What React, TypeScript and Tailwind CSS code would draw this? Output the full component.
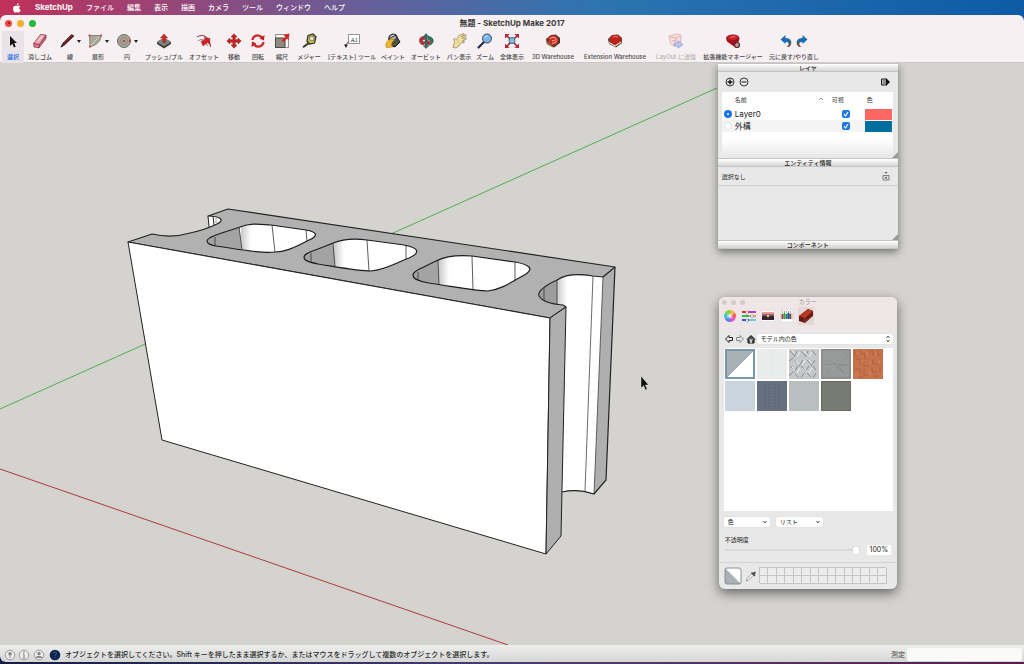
import type { ReactNode } from 'react';

const MENUS = ['ファイル', '編集', '表示', '描画', 'カメラ', 'ツール', 'ウィンドウ', 'ヘルプ'];

function Icon({ children }: { children: ReactNode }) {
  return (
    <svg viewBox="0 0 16 16" className="h-4 w-4" aria-hidden="true">
      {children}
    </svg>
  );
}

interface Tool {
  label: string;
  width: string;
  icon: ReactNode;
  menu?: boolean;
  active?: boolean;
  disabled?: boolean;
}

const TOOLS: Tool[] = [
  {
    label: '選択',
    width: 'w-[22px]',
    active: true,
    icon: <path d="M5 3v10l2.300-2.200L9 14.500l1.700-.8L9.200 10H12Z" fill="#111" />,
  },
  {
    label: '消しゴム',
    width: 'w-8',
    icon: (
      <g stroke="#8d4050" strokeWidth=".8" strokeLinejoin="round">
        <path d="m1.500 10.500 7-9 5.500.5-6.500 9.500Z" fill="#f5a5b4" />
        <path d="m1.500 10.500.5 3.500 5 .8.500-3.300Z" fill="#dd7c8f" />
        <path d="M14 2v3.500l-7 9.300.5-3.300Z" fill="#c9667c" />
        <path d="m6 8 5-5" stroke="#fff" />
      </g>
    ),
  },
  {
    label: '線',
    width: 'w-7',
    menu: true,
    icon: (
      <>
        <path d="m2 14 2-4 8.500-8.500L15 3 5.500 12Z" fill="#5a1620" stroke="#2a1214" strokeWidth=".6" />
        <path d="m5 10 8-7.500" stroke="#c23a3a" strokeWidth=".8" />
        <path d="m1.500 14.500 1-2 1.200 1Z" fill="#111" />
      </>
    ),
  },
  {
    label: '扇形',
    width: 'w-7',
    menu: true,
    icon: (
      <>
        <path d="M2.500 2.500H14C14 9 8 13 3 13.500Z" fill="#a9a899" stroke="#77776b" strokeWidth=".8" />
        <path d="m3 13 9-9" stroke="#d9d8cc" />
        <path d="M1.500 1.500h2v2h-2zM13 1.500h2v2h-2zM2 12.500h2v2H2z" fill="#d14b42" />
      </>
    ),
  },
  {
    label: '円',
    width: 'w-[30px]',
    menu: true,
    icon: (
      <>
        <circle cx="8" cy="8" r="6.500" fill="#a2a295" stroke="#6f6f66" />
        <circle cx="8" cy="8" r="3.500" fill="none" stroke="#8b8b80" />
        <path d="M7 7h2v2H7zM13 7h2v2h-2z" fill="#d8392f" />
      </>
    ),
  },
  {
    label: 'プッシュ/プル',
    width: 'w-11',
    icon: (
      <>
        <path d="m1 9 7 4 7-4v2l-7 4.500L1 11Z" fill="#3c3e38" />
        <path d="m1 9 7-4 7 4-7 4Z" fill="#83867c" stroke="#4a4c46" strokeWidth=".5" />
        <path d="M8 1 4.500 5H7v4.500h2.500V5h2Z" fill="#d62727" stroke="#7c1515" strokeWidth=".5" />
      </>
    ),
  },
  {
    label: 'オフセット',
    width: 'w-9',
    icon: (
      <>
        <path d="M1 4C7 0 14 4 14.500 14" fill="none" stroke="#8f2a2a" />
        <path d="M2 8c4-3 8-1 9.500 5" fill="none" stroke="#55544f" strokeWidth=".7" />
        <path d="m5 8.500 4-2-1-2 6 1-.5 6-1.800-2L7 13Z" fill="#d71f26" stroke="#7d1a1c" strokeWidth=".4" />
      </>
    ),
  },
  {
    label: '移動',
    width: 'w-6',
    icon: (
      <path
        d="m8 .8 3 3.200H9.200v2.800H12V5l3.200 3L12 11V9.200H9.200V12H11l-3 3.200L5 12h1.800V9.200H4V11L.8 8 4 5v1.800h2.800V4H5Z"
        fill="#ce2222"
        stroke="#7e1919"
        strokeWidth=".5"
      />
    ),
  },
  {
    label: '回転',
    width: 'w-6',
    icon: (
      <>
        <path d="M2.500 7C3 2 9 1 12 4.500M13.500 9C13 14 7 15 4 11.500" fill="none" stroke="#d02828" strokeWidth="2.300" />
        <path d="m14.500 2-.5 5.500-4.500-2ZM1.500 14 2 8.500l4.500 2Z" fill="#c32020" />
      </>
    ),
  },
  {
    label: '縮尺',
    width: 'w-6',
    icon: (
      <>
        <path d="M1.500 1.500h13v13h-13Z" fill="#f7f4f2" stroke="#7a7971" strokeWidth=".8" />
        <path d="M1.500 5h9.500v9.500H1.500Z" fill="#8e8b80" stroke="#4b4a44" />
        <path d="m15.500.5-1 6.500-1.500-1.500-3.500 4-2-2 4-3.500L9.500 2Z" fill="#d92424" />
      </>
    ),
  },
  {
    label: 'メジャー',
    width: 'w-[30px]',
    icon: (
      <>
        <path d="M7 2.500 12 1l3 3-1.500 6-5 1L6 8Z" fill="#d9cf32" stroke="#252a25" strokeWidth="1.200" />
        <circle cx="10.700" cy="5.500" r="2.500" fill="#d9ddde" stroke="#444" strokeWidth=".7" />
        <path d="m7.500 9-6 4.500 1 1.500L9 10.500Z" fill="#39391b" />
      </>
    ),
  },
  {
    label: '[テキスト] ツール',
    width: 'w-14',
    icon: (
      <>
        <path d="M4.500 1.500h11v9h-11Z" fill="#fff" stroke="#777" strokeWidth=".8" />
        <path d="M4.500 8.500 2 11.500v2" stroke="#555" fill="none" />
        <path d="m0 11.500 2 3.500 2-3.500Z" fill="#222" />
        <text x="6.500" y="8.500" fontSize="6" fontFamily="Liberation Serif, serif" fill="#111">A1</text>
      </>
    ),
  },
  {
    label: 'ペイント',
    width: 'w-[26px]',
    icon: (
      <>
        <path d="M4 7C3 1 11-1 12 4" fill="none" stroke="#333" strokeWidth="1.300" />
        <path d="m4 6 7-3.500L15 9l-5 5-5-2Z" fill="#4f5046" stroke="#1c1c19" />
        <ellipse cx="8" cy="5.500" rx="4.200" ry="2" transform="rotate(-28 8 5.500)" fill="#aaa898" stroke="#111" strokeWidth=".6" />
        <path d="M6.500 6C1 7 0 12 1.500 14.500L8 14c-2.500-2-1.500-5 1.500-7Z" fill="#edb62b" stroke="#9b6a13" strokeWidth=".5" />
      </>
    ),
  },
  {
    label: 'オービット',
    width: 'w-10',
    icon: (
      <>
        <path d="M6.500 3.500C-.5 3 0 12 6 12l.5-2.500C3 9 4 7 6.500 6.500Z" fill="#b82c3b" stroke="#571d27" strokeWidth=".5" />
        <path d="M10 3.500c7 0 7 8 .5 9V9.500C13 9 12.500 7 10 6.500Z" fill="#2f7a62" stroke="#1f4437" strokeWidth=".5" />
        <path d="m8.500 6 4.500 3.500-3.500 3.500V11C6 11 5 9 4 8c2 .8 3.500 1 5 .6Z" fill="#c72f39" />
        <path d="M8 .5 5.500 3.500H7V13H5.500L8 15.500l2.500-2.500H9.200V3.500h1.600Z" fill="#30775e" stroke="#26352e" strokeWidth=".4" />
      </>
    ),
  },
  {
    label: 'パン表示',
    width: 'w-[26px]',
    icon: (
      <>
        <path
          d="M2 14.500 3.500 9 2.500 6 4 5.500l1.500 1L8 2.500l4.500-2 .8 1L10 4l4.500-2.500.8 1.200L11.500 5.500l3.500-.8.3 1.300-4 2 2.200.3-.5 1.200-3.500.5L8 13l-3 2Z"
          fill="#efdf9f"
          stroke="#7d7146"
          strokeWidth=".6"
        />
        <path d="m6 10 2-3" stroke="#c2ad67" strokeWidth=".6" />
      </>
    ),
  },
  {
    label: 'ズーム',
    width: 'w-[26px]',
    icon: (
      <>
        <path d="m1.500 14.500 6-6" stroke="#222b3c" strokeWidth="2.200" strokeLinecap="round" />
        <circle cx="10" cy="5.500" r="4.500" fill="#78b4e6" stroke="#34496a" />
        <path d="M7.500 5C8 3 10 2.500 11 3" stroke="#d5ecff" fill="none" />
      </>
    ),
  },
  {
    label: '全体表示',
    width: 'w-7',
    icon: (
      <>
        <path d="m2 2 12 12M14 2 2 14" stroke="#8d3441" strokeWidth="1.600" />
        <path d="M1 1h4.500L1 5.500ZM15 1v4.500L10.500 1ZM1 15v-4.500L5.500 15ZM15 15h-4.500l4.500-4.500Z" fill="#c61f30" />
        <circle cx="8" cy="7.500" r="3" fill="#86bde0" stroke="#31506b" strokeWidth=".8" />
      </>
    ),
  },
  {
    label: '3D Warehouse',
    width: 'w-[54px]',
    icon: (
      <>
        <path d="m1 6 5-4 5-.5L15 5v5l-6 4.500L2 11Z" fill="#4d3326" />
        <path d="m3 5 4-2.500h4L13.500 6 12 11l-4 2-4-3Z" fill="#cf2c22" />
        <path d="M5 5.500c3-2 6-1 6 .5S8.500 8 7 7.500M7 10c2 .5 4-.5 5-2.500" fill="none" stroke="#f2cab6" strokeWidth=".9" />
        <path d="m1 7 6 5 1 2.500L2 11Z" fill="#8d6b45" />
      </>
    ),
  },
  {
    label: 'Extension Warehouse',
    width: 'w-[70px]',
    icon: (
      <>
        <path d="m1 6 4-4 6-.5L15 5v5l-6 4.500L2 11Z" fill="#54432f" />
        <path d="M3 5c1-4 10-4 11 0v4l-5 3-6-3Z" fill="#c4201b" />
        <path d="M6 4.500c1-1.500 4-1.500 5 0" fill="none" stroke="#f08a78" />
        <path d="m2 9.500 6 3.500 6-4" fill="none" stroke="#e9d9c9" strokeWidth="1.200" />
      </>
    ),
  },
  {
    label: 'LayOut に送信',
    width: 'w-[52px]',
    disabled: true,
    icon: (
      <>
        <path d="m1 3 8-2 4 1-.5 8-7 3-3-2Z" fill="#f8dfe0" stroke="#e3a9ab" strokeWidth=".8" />
        <path d="m2 4 6 1 4-2M4 8l5-1M8 5v4" stroke="#dfa0a3" strokeWidth=".8" fill="none" />
        <path d="M6 10h4V8l5 3.500-5 3.500v-2H6Z" fill="#b8c9ed" stroke="#8496cd" strokeWidth=".7" />
      </>
    ),
  },
  {
    label: '拡張機能マネージャー',
    width: 'w-[62px]',
    icon: (
      <>
        <path d="M1 5c1-4 12-5 13.500 0L14 8l-5 5.500L2 8.500Z" fill="#a31218" />
        <path d="M2 5c2-3 10-3.500 11.500-.5L8 7.500Z" fill="#c7262a" />
        <path d="M5.500 4.500c1.500-1.200 3-1.200 4.500-.5" stroke="#f59a8e" strokeWidth=".8" fill="none" />
        <circle cx="12" cy="12" r="2.400" fill="#eee" stroke="#5e2429" strokeWidth="1.400" />
        <circle cx="12" cy="12" r=".8" fill="#73262b" />
      </>
    ),
  },
];

function Toolbar() {
  return (
    <div className="flex h-8 items-start pl-0.5">
      {TOOLS.map((tool) => (
        <button
          key={tool.label}
          type="button"
          disabled={tool.disabled}
          className={`flex h-8 shrink-0 flex-col items-center gap-1 pt-0.5 text-[6px] leading-[8px] font-medium whitespace-nowrap ${tool.width} ${
            tool.active ? 'bg-[#e9e3e8] text-[#2868e8]' : tool.disabled ? 'text-[#b5afb1]' : 'text-[#4a4748]'
          }`}
        >
          <span className="flex items-center gap-0.5">
            <Icon>{tool.icon}</Icon>
            {tool.menu && (
              <svg viewBox="0 0 4 3" className="h-[3px] w-1" aria-hidden="true">
                <path d="M0 0h4L2 3Z" fill="#222" />
              </svg>
            )}
          </span>
          <span>{tool.label}</span>
        </button>
      ))}
      <div className="flex w-[60px] shrink-0 flex-col items-center gap-1 pt-0.5 text-[6px] leading-[8px] font-medium whitespace-nowrap text-[#4a4748]">
        <span className="flex">
          <button type="button" aria-label="元に戻す">
            <Icon>
              <path d="M2.500 6.500 7.500 2v3c6 0 7.500 5 4 8.500.5-2.500-1-4.500-4-4.500v2Z" fill="#1a6db5" />
              <path d="M12.500 8c.8 2 .3 3.500-1 5.500-1 .8-2 .5-3 0 2-.5 2.500-2.500 2-4Z" fill="#6b5536" />
            </Icon>
          </button>
          <button type="button" aria-label="やり直し">
            <Icon>
              <path d="M13.500 6.500 8.500 2v3C2.500 5 1 10 4.500 13.500 4 11 5.500 9 8.500 9v2Z" fill="#1a6db5" />
              <path d="M3.500 8c-.8 2-.3 3.500 1 5.500 1 .8 2 .5 3 0-2-.5-2.500-2.500-2-4Z" fill="#6b5536" />
            </Icon>
          </button>
        </span>
        <span>元に戻す/やり直し</span>
      </div>
    </div>
  );
}

const HOLES = [
  {
    outline: 'M207 241C207 238 212 236 240 227 250 223 258 224 271 225L306 230C318 232 318 236 309 240 292 249 284 252 275 252 264 253 255 252 216 246 210 245 207 243 207 241Z',
    wall: 'M200 220H239L242 256H200Z',
    lines: 'M239 227l3 23M272 225l3 27M306 230l1 11M215 237v9',
    shade: 241,
  },
  {
    outline: 'M304 257C304 253 312 252 333 243 343 239 353 238 367 240L404 245C420 248 420 253 409 258 396 263 385 270 371 271 359 271 349 269 318 264 309 262 304 261 304 257Z',
    wall: 'M300 230H333L335 275H300Z',
    lines: 'M333 243l2 24M367 240l2 31M406 246v13M311 253v9',
    shade: 334,
  },
  {
    outline: 'M413 275C413 271 420 269 436 261 448 255 460 255 472 256L515 262C531 265 533 269 526 274 510 283 502 289 488 291 478 291 474 290 429 283 418 281 413 279 413 275Z',
    wall: 'M400 240H438L439 295H400Z',
    lines: 'M438 260l1 25M472 256l1 34M515 262v18M418 272v9',
    shade: 439,
  },
];

function BlockModel() {
  return (
    <svg
      viewBox="0 63 1024 582"
      preserveAspectRatio="xMidYMid slice"
      className="absolute inset-0 h-full w-full"
      role="img"
      aria-label="コンクリートブロック"
    >
      <defs>
        <linearGradient id="curve">
          <stop offset="0" stopColor="#c9c9c9" />
          <stop offset="1" stopColor="#fff" />
        </linearGradient>
        {HOLES.map((hole, i) => (
          <clipPath key={hole.shade} id={`hole${i}`}>
            <path d={hole.outline} />
          </clipPath>
        ))}
      </defs>
      <path d="M0 409 717 88" stroke="#4fae4f" />
      <path d="M0 469 508 645" stroke="#b23a3a" />

      {/* far end of the block, behind the notch */}
      <path d="M540 280 560 274 603 277 594 494C585 491 574 489 561 492L550 318Z" fill="#fff" />
      <path d="M557 276h10v32h-10Z" fill="url(#curve)" />
      <path d="M538 296C539 290 545 287 557 280V308Z" fill="#9d9d9d" />
      <path d="M603 277 615 267 606 480 594 494Z" fill="#afafaf" />
      <path d="M593 276 585 491" stroke="#444" strokeWidth=".8" />
      <path d="M603 277 594 494" stroke="#444" strokeWidth=".8" />
      <path d="M557 280v25M544 287v14" stroke="#333" strokeWidth=".8" />
      <path d="M208 216 222 216V224L209 228Z" fill="#fff" />
      <path d="M208 216l1 11M213 216l1 9" stroke="#222" />
      <path d="M216 216v7" stroke="#777" strokeWidth=".7" />

      <path
        d="M128 242 152 234C165 237 180 236 190 233 204 230 209 228 217 224 226 220 219 216 208 216L228 209 615 267 603 277 593 276C575 273 563 276 557 280 540 288 538 293 539 296 542 301 550 304 563 305L566 307 550 318Z"
        fill="#b1b1b1"
        stroke="#222"
        strokeWidth="1.200"
        strokeLinejoin="round"
      />
      {HOLES.map((hole, i) => (
        <g key={hole.shade}>
          <g clipPath={`url(#hole${i})`}>
            <path d={hole.outline} fill="#fff" />
            <rect x={hole.shade} y="210" width="10" height="90" fill="url(#curve)" />
            <path d={hole.wall} fill="#a3a3a3" />
            <path d={hole.lines} stroke="#333" strokeWidth=".8" />
          </g>
          <path d={hole.outline} fill="none" stroke="#1d1d1d" strokeWidth="1.200" />
        </g>
      ))}
      <path d="M128 242 550 318 546 554 162 440Z" fill="#fff" stroke="#222" strokeLinejoin="round" />
      <path d="M550 318 566 307 561 536 546 554Z" fill="#afafaf" stroke="#222" strokeLinejoin="round" />
      <path d="M615 267 606 480 594 494C585 491 574 489 562 492" fill="none" stroke="#222" strokeWidth="1.200" />
      <path d="M641 376v12l2.600-2.300 1.800 4.200 1.800-.8-1.800-4.100h3.200Z" fill="#111" stroke="#eee" strokeWidth=".4" />
    </svg>
  );
}

function TrayTitle({ children }: { children: ReactNode }) {
  return (
    <h2 className="h-[9px] border-y border-[#c4c4c4] bg-linear-to-b from-white to-[#d5d5d5] text-center text-[6px] leading-[7px] font-medium text-[#222]">
      {children}
    </h2>
  );
}

function ResizeCorner() {
  return (
    <svg viewBox="0 0 6 6" className="absolute right-0 bottom-0 h-1.5 w-1.5" aria-hidden="true">
      <path d="M6 0v6H0Z" fill="#999" />
    </svg>
  );
}

function LayerRow({ name, color, current }: { name: string; color: string; current?: boolean }) {
  return (
    <tr className="h-3 even:bg-[#f4f4f4]">
      <td className="w-[13px]">
        <input
          type="radio"
          name="layer"
          aria-label={name}
          defaultChecked={current}
          className="ml-0.5 block h-2 w-2 appearance-none rounded-full border border-[#e4e4e4] bg-white checked:border-[3px] checked:border-[#1775e5]"
        />
      </td>
      <td className="w-[97px] text-[8px] leading-[12px] text-[#222]">{name}</td>
      <td className="w-[33px]">
        <span className="relative ml-2.5 block h-2 w-2">
          <input
            type="checkbox"
            aria-label={`${name} 可視`}
            defaultChecked
            className="block h-2 w-2 appearance-none rounded-xs bg-[#1b78e6]"
          />
          <svg viewBox="0 0 8 8" className="pointer-events-none absolute inset-0 h-2 w-2" aria-hidden="true">
            <path d="m2 4 1.500 2L6 2" fill="none" stroke="#fff" strokeWidth="1.200" />
          </svg>
        </span>
      </td>
      <td className="pr-px">
        <span className={`block h-[11px] ${color}`} />
      </td>
    </tr>
  );
}

function Tray() {
  return (
    <section className="absolute top-0 left-[70.1%] w-[180px] bg-[#e8e8e8] shadow-[0_3px_8px_#0007]">
      <TrayTitle>レイヤ</TrayTitle>
      <div className="relative flex h-[86px] flex-col pr-[5px] pl-1">
        <div className="flex h-5 items-center gap-1 px-[3px]">
          <button type="button" aria-label="レイヤを追加">
            <svg viewBox="0 0 10 10" className="h-2.5 w-2.5">
              <circle cx="5" cy="5" r="4" fill="none" stroke="#222" strokeWidth=".9" />
              <path d="M5 2.500v5M2.500 5h5" stroke="#111" strokeWidth="1.400" />
            </svg>
          </button>
          <button type="button" aria-label="レイヤを削除">
            <svg viewBox="0 0 10 10" className="h-2.5 w-2.5">
              <circle cx="5" cy="5" r="4" fill="none" stroke="#222" strokeWidth=".9" />
              <path d="M2.500 5h5" stroke="#111" />
            </svg>
          </button>
          <button type="button" aria-label="詳細" className="ml-auto">
            <svg viewBox="0 0 10 10" className="h-2.5 w-2.5">
              <path d="M1.500 2h5v6h-5Z" fill="#bbb" stroke="#222" />
              <path d="M3 4h3M3 6h3" stroke="#444" strokeWidth=".7" />
              <path d="m6 1 4 4-4 4Z" fill="#111" />
            </svg>
          </button>
        </div>
        <div className="h-[62px] bg-linear-to-b from-white from-75% to-[#ececec]">
          <table className="w-full table-fixed border-collapse">
            <thead>
              <tr className="h-4 text-left text-[6px] leading-[8px] text-[#333]">
                <th className="w-[13px]" />
                <th className="w-[97px] font-normal">
                  <span className="flex justify-between pr-2">
                    名前
                    <svg viewBox="0 0 6 6" className="h-1.5 w-1.5" aria-hidden="true">
                      <path d="m1 4 2-2 2 2" fill="none" stroke="#666" strokeWidth=".7" />
                    </svg>
                  </span>
                </th>
                <th className="w-[33px] font-normal">可視</th>
                <th className="pl-0.5 font-normal">色</th>
              </tr>
            </thead>
            <tbody>
              <LayerRow name="Layer0" color="bg-[#ff6661]" current />
              <LayerRow name="外構" color="bg-[#006f9f]" />
            </tbody>
          </table>
        </div>
        <ResizeCorner />
      </div>
      <TrayTitle>エンティティ情報</TrayTitle>
      <div className="relative h-[73px]">
        <div className="flex h-[19px] items-center justify-between border-b border-[#cfcfcf] pr-2 pl-1 text-[6px] text-[#222]">
          <span>選択なし</span>
          <svg viewBox="0 0 8 10" className="h-2.5 w-2" aria-hidden="true">
            <path d="M1 4.500h6v4.500H1Z" fill="#ddd" stroke="#666" strokeWidth=".8" />
            <path d="M2.500 1h3L4 3Z" fill="#666" />
            <path d="M3 6h2v1.500H3Z" fill="#666" />
          </svg>
        </div>
        <ResizeCorner />
      </div>
      <TrayTitle>コンポーネント</TrayTitle>
    </section>
  );
}

const PICKER_TABS = [
  {
    label: 'カラーホイール',
    icon: (
      <>
        <path d="M8 8V2a6 6 0 0 1 5.200 3Z" fill="#f3b53c" />
        <path d="m8 8 5.200-3a6 6 0 0 1 0 6Z" fill="#f2565f" />
        <path d="m8 8 5.200 3A6 6 0 0 1 8 14Z" fill="#d84fd8" />
        <path d="M8 8v6a6 6 0 0 1-5.200-3Z" fill="#5580f0" />
        <path d="m8 8-5.200 3a6 6 0 0 1 0-6Z" fill="#38c8d0" />
        <path d="M8 8 2.800 5A6 6 0 0 1 8 2Z" fill="#70d444" />
        <circle cx="8" cy="8" r="3" fill="#fff" opacity=".35" />
        <circle cx="8" cy="8" r="1.600" fill="#fff" opacity=".7" />
      </>
    ),
  },
  {
    label: 'カラースライダ',
    icon: (
      <>
        <path d="M1 3h7v2H1z" fill="#d33" /><path d="M8 3h7v2H8z" fill="#a4c" />
        <path d="M1 7h7v2H1z" fill="#3b4" /><path d="M8 7h7v2H8z" fill="#e95" />
        <path d="M1 11h7v2H1z" fill="#35c" /><path d="M8 11h7v2H8z" fill="#6cd" />
        <path d="M5 3h2v3H5zM10 7h2v3h-2zM5 11h2v3H5z" fill="#fff" stroke="#777" strokeWidth=".4" />
      </>
    ),
  },
  {
    label: 'イメージパレット',
    icon: (
      <>
        <path d="M2 3h12v10H2z" fill="#fff" />
        <path d="M2 4h12v5H2z" fill="#e8a08d" />
        <path d="M2 6h12v2H2z" fill="#8c5a72" />
        <path d="M2 8h12v4H2z" fill="#35252c" />
        <circle cx="8" cy="8" r="1.200" fill="#f6c957" />
      </>
    ),
  },
  {
    label: '鉛筆',
    icon: (
      <>
        <path d="M2 2h12v12H2z" fill="#fff" stroke="#ccc" strokeWidth=".5" />
        <path d="M2.500 6h2v5h-2z" fill="#a34" /><path d="M4.500 5h2v6h-2z" fill="#4a3" />
        <path d="M6.500 6h2v5h-2z" fill="#287" /><path d="M8.500 5h2v6h-2z" fill="#24a" />
        <path d="M10.500 6h1.500v5h-1.500z" fill="#63a" /><path d="M12 5h1.500v6H12z" fill="#dc4" />
        <path d="M3 4h10" stroke="#444" strokeDasharray="1 1" />
      </>
    ),
  },
  {
    label: 'テクスチャ',
    icon: (
      <>
        <path d="m1 8 9-7 5 2v5l-8 7-6-2Z" fill="#671b14" />
        <path d="m1 8 9-7 5 2-8 7Z" fill="#b53a26" />
        <path d="m5 7 6-4M7 9v5l7-6" fill="none" stroke="#a4402c" strokeWidth=".8" />
      </>
    ),
  },
];

const MATERIALS = [
  {
    name: '既定',
    art: (
      <>
        <path d="M0 0h30v30H0z" fill="#a7b1b6" />
        <path d="M2 28 28 2v26Z" fill="#fff" />
        <path d="M1 1h28v28H1Z" fill="none" stroke="#7896af" strokeWidth="2" />
        <path d="M2 28 28 2" stroke="#718ca2" strokeWidth=".6" />
      </>
    ),
  },
  {
    name: '白タイル',
    art: (
      <>
        <path d="M0 0h30v30H0z" fill="#e9eceb" />
        <path d="M15 0v30M0 15h30" stroke="#e4e8e7" />
      </>
    ),
  },
  {
    name: '縞鋼板',
    art: (
      <>
        <path d="M0 0h30v30H0z" fill="#c6c7c8" />
        <path
          d="m1 2 4 4m3-4-3 6m7-6 4 4m3-4-3 6m7-6 4 4M0 12l4-3m2 2 4 4m4-4-4 6m8-6 4 4m4-4-4 6M1 17l4 4m4-4-4 6m7-6 4 4m4-4-4 6m8-6 3 4M0 27l4-4m2 2 4 4m5-5-3 5m6-5 4 4m5-4-3 5"
          stroke="#8b8d8f"
        />
        <path d="m3 1 3 4m5-2-3 5m7-6 3 4m5-3-3 5m-13 3 3 4m6-4-3 5m7-5 3 4M3 18l3 4m5-3-3 5m7-5 3 4m5-4-3 5" stroke="#f1f2f2" />
      </>
    ),
  },
  {
    name: '石畳',
    art: (
      <>
        <path d="M0 0h30v30H0z" fill="#989999" />
        <path d="M4 16h9m4 0h9M6 25 26 6M6 5l8 10 9 9M1 1h28v28H1Z" fill="none" stroke="#818383" />
        <path d="m7 25 18-19M4 17h9M5 4l9 10" fill="none" stroke="#b0b2b2" strokeWidth=".7" />
      </>
    ),
  },
  {
    name: 'レンガ',
    art: (
      <>
        <path d="M0 0h30v30H0z" fill="#c4734d" />
        <path
          d="M2 2v5h3M8 1v4h4v5M16 2h4v5M25 1v5h3M3 10h4v6M11 13v4h5M20 10v5h5M2 20h5v5M11 20v6h4M19 18v5h5M27 17v7M6 28h4M20 27h5"
          fill="none"
          stroke="#b0603c"
        />
        <path d="M5 3v3M14 3v5M23 3v4M9 11v3M17 12v3M3 23v4M17 22v4M26 11v4" stroke="#d38560" />
      </>
    ),
  },
  {
    name: '水色タイル',
    art: (
      <>
        <path d="M0 0h30v30H0z" fill="#cad4dd" />
        <path d="m3 6 3 3M22 9l4 3M9 18l3-3M15 24l4 2" stroke="#d4dde4" />
      </>
    ),
  },
  {
    name: '紺',
    art: (
      <>
        <path d="M0 0h30v30H0z" fill="#667080" />
        <path d="M8 3v24M12 3v24M18 3v24M22 3v24" stroke="#586273" strokeDasharray="2 1" />
      </>
    ),
  },
  { name: '灰色', art: <path d="M0 0h30v30H0z" fill="#b9bebe" /> },
  {
    name: '暗い灰色',
    art: (
      <>
        <path d="M0 0h30v30H0z" fill="#777b72" />
        <path d="M.5.5h29v29H.5Z" fill="none" stroke="#686c64" />
      </>
    ),
  },
];

function PopUp({ label, value, width, both }: { label: string; value: string; width: string; both?: boolean }) {
  return (
    <span className={`relative block ${width}`}>
      <select
        aria-label={label}
        className="block h-2.5 w-full appearance-none rounded-xs bg-white pl-1 text-[6px] leading-[10px] text-[#222] shadow-[0_0_1px_#bbb]"
      >
        <option>{value}</option>
      </select>
      <svg viewBox="0 0 6 8" className="pointer-events-none absolute top-px right-0.5 h-2 w-1.5" aria-hidden="true">
        <path
          d={both ? 'm1.500 3 1.500-2 1.500 2m0 2L3 7 1.500 5' : 'm1.500 3 1.500 2 1.500-2'}
          fill="none"
          stroke="#333"
          strokeWidth=".8"
        />
      </svg>
    </span>
  );
}

function ColorPanel() {
  return (
    <section className="absolute top-[234px] left-[70.2%] w-[178px] overflow-hidden rounded-md bg-[#e9e8e8] shadow-[0_4px_12px_#0008]">
      <header className="h-[34px] bg-linear-to-b from-[#f1e5e7] to-[#ece6e7]">
        <div className="relative flex h-2.5 items-center gap-1 px-[3px]">
          <span className="h-[5px] w-[5px] rounded-full bg-[#d5cbcd]" />
          <span className="h-[5px] w-[5px] rounded-full bg-[#d5cbcd]" />
          <span className="h-[5px] w-[5px] rounded-full bg-[#d5cbcd]" />
          <h2 className="absolute inset-x-0 text-center text-[6px] leading-[10px] text-[#9d9496]">カラー</h2>
        </div>
        <div className="flex gap-[3px] px-[3px]">
          {PICKER_TABS.map((tab, i) => (
            <button
              key={tab.label}
              type="button"
              aria-label={tab.label}
              className={`flex h-[18px] w-4 justify-center pt-px ${i === 4 ? 'rounded-xs bg-[#e3d8d8]' : ''}`}
            >
              <Icon>{tab.icon}</Icon>
            </button>
          ))}
        </div>
      </header>
      <div className="flex h-[17px] items-center gap-px pr-1 pb-px pl-[5px]">
        <button type="button" aria-label="戻る">
          <svg viewBox="0 0 10 10" className="h-2.5 w-2.5">
            <path d="m1.500 5 3.500-3.500v2h3.500v3H5v2Z" fill="none" stroke="#222" />
          </svg>
        </button>
        <button type="button" aria-label="進む">
          <svg viewBox="0 0 10 10" className="h-2.5 w-2.5">
            <path d="M8.500 5 5 1.500v2H1.500v3H5v2Z" fill="none" stroke="#888" />
          </svg>
        </button>
        <button type="button" aria-label="モデル内">
          <svg viewBox="0 0 10 10" className="h-2.5 w-2.5">
            <path d="m1 5.500 4-4 4 4M2 5v4h6V5" fill="#555" stroke="#111" />
            <path d="M4.300 6h1.400v3H4.300z" fill="#fff" />
          </svg>
        </button>
        <PopUp label="ライブラリ" value="モデル内の色" width="flex-1" both />
      </div>
      <div className="mr-1 ml-[5px] h-[163px] bg-white px-px pt-px">
        <div className="flex flex-wrap gap-0.5">
          {MATERIALS.map((material) => (
            <button key={material.name} type="button" aria-label={material.name}>
              <svg viewBox="0 0 30 30" className="block h-[30px] w-[30px]">{material.art}</svg>
            </button>
          ))}
        </div>
      </div>
      <div className="flex gap-1.5 px-[5px] pt-[6px]">
        <PopUp label="編集" value="色" width="w-[46px]" />
        <PopUp label="表示" value="リスト" width="w-[47px]" />
      </div>
      <div className="px-1.5 pt-[9px]">
        <label htmlFor="opacity" className="block text-[6px] leading-[8px] text-[#222]">
          不透明度
        </label>
        <div className="flex h-3 items-center gap-2">
          <input
            id="opacity"
            type="range"
            defaultValue={100}
            className="block h-2.5 w-[134px] appearance-none bg-linear-to-b from-transparent from-40% via-[#c8c8c8] via-50% to-transparent to-60% [&::-webkit-slider-thumb]:h-2 [&::-webkit-slider-thumb]:w-1.5 [&::-webkit-slider-thumb]:appearance-none [&::-webkit-slider-thumb]:rounded-t-full [&::-webkit-slider-thumb]:bg-white [&::-webkit-slider-thumb]:shadow-[0_0_1px_#777]"
          />
          <input
            aria-label="不透明度の値"
            defaultValue="100%"
            className="block h-2.5 w-6 bg-white text-center text-[7px] leading-[10px] text-[#222]"
          />
        </div>
      </div>
      <div className="mt-1.5 flex h-[27px] items-center gap-1 border-t border-[#d3d3d3] px-[5px]">
        <svg viewBox="0 0 18 18" className="h-[18px] w-[18px]" aria-hidden="true">
          <rect x="1" y="1" width="16" height="16" rx="2" fill="#fff" />
          <path d="m1 1 16 16H3a2 2 0 0 1-2-2Z" fill="#a8b1b3" />
          <rect x="1" y="1" width="16" height="16" rx="2" fill="none" stroke="#8a8f90" />
        </svg>
        <button type="button" aria-label="スポイト">
          <svg viewBox="0 0 10 12" className="h-3 w-2.5">
            <path d="m.5 11 .5-2.500 5-5 1.500 1.500-5 5Z" fill="#fff" stroke="#777" strokeWidth=".7" />
            <path d="m5 3 1-1 1 1 1-1c1-1 2.300.3 1.500 1.300L8.500 4.500l1 1-1 1Z" fill="#444" />
          </svg>
        </button>
        <div className="grid w-[127px] grid-cols-15">
          {Array.from({ length: 30 }, (_, i) => (
            <span key={i} className="h-2 border-r border-b border-[#c4c4c4] bg-[#ececec] shadow-[-1px_-1px_0_#c4c4c4]" />
          ))}
        </div>
      </div>
    </section>
  );
}

function StatusBar() {
  return (
    <footer className="flex h-[17px] shrink-0 items-center rounded-bl-md bg-linear-to-b from-[#eeeeed] to-[#d5d7d5] pt-0.5 pl-1 text-[7px] leading-[12px] font-medium text-[#2b2b2b]">
      <svg viewBox="0 0 58 12" className="h-3 w-[58px]" aria-hidden="true">
        <g fill="#ececec" stroke="#888" strokeWidth=".8">
          <circle cx="6" cy="6" r="4.800" />
          <circle cx="20" cy="6" r="4.800" />
          <circle cx="35" cy="6" r="4.800" />
        </g>
        <circle cx="6" cy="4.800" r="1.800" fill="#888" />
        <path d="M6 5v4M20 5v4M19 5h1M19 9h2" stroke="#888" />
        <circle cx="20" cy="3.200" r=".8" fill="#888" />
        <circle cx="35" cy="4.500" r="1.700" fill="#888" />
        <path d="M31.500 9c1-3 6-3 7 0Z" fill="#888" />
        <circle cx="51" cy="6" r="5.300" fill="#0b2450" />
        <path d="M49.500 4.500c0-2 3-2 3 0 0 1-1.500 1-1.500 2.300M51 8v1" fill="none" stroke="#45649b" />
      </svg>
      <p className="ml-[3px] whitespace-nowrap">
        オブジェクトを選択してください。Shift キーを押したまま選択するか、またはマウスをドラッグして複数のオブジェクトを選択します。
      </p>
      <label htmlFor="measure" className="ml-auto text-[#666]">
        測定
      </label>
      <input id="measure" className="mr-0.5 ml-0.5 h-[13px] w-[115px] rounded-xs bg-[#fafafa]" />
    </footer>
  );
}

export default function App() {
  return (
    <div className="flex h-screen flex-col overflow-hidden bg-linear-to-r from-[#151d45] via-[#4b3c72] to-[#5a1d4d] pb-0.5 font-[Inter,'Noto_Sans_CJK_JP',sans-serif]">
      <div className="shrink-0 bg-[linear-gradient(to_right,#c0305a,#66609a_36%,#2d74b0_58%,#0d5ba7)]">
        <nav className="flex h-[15px] items-center gap-[13px] pl-3 text-[7px] leading-[15px] font-medium text-white">
          <svg viewBox="0 0 10 12" className="h-2.5 w-2.5" aria-hidden="true">
            <path d="M7 0C7 1.500 6 2.800 4.700 2.700 4.700 1.500 5.700.3 7 0ZM8.900 4C7 5 7.200 7.800 9.400 8.500 9 10 8 11.500 7 11.500c-.8 0-1-.5-2-.5s-1.300.5-2 .5C1.500 11.500 0 8.500.3 6.200.6 3.800 2.500 3 3.700 3.200c.6.100 1 .4 1.400.4.500 0 1-.4 1.800-.5.800 0 1.600.3 2 .9Z" fill="#fff" />
          </svg>
          <a href="#" className="text-[8px] font-bold">SketchUp</a>
          {MENUS.map((menu) => (
            <a key={menu} href="#">{menu}</a>
          ))}
        </nav>
        <header className="h-12 rounded-t-md border-b border-[#cfc9ca] bg-[#f6f0f2]">
          <div className="relative flex h-4 items-center gap-[5px] pl-[5px]">
            <button type="button" aria-label="閉じる" className="flex h-[7px] w-[7px] items-center justify-center rounded-full bg-[#f0483f]">
              <span className="h-0.5 w-0.5 rounded-full bg-[#7a1713]" />
            </button>
            <button type="button" aria-label="しまう" className="h-[7px] w-[7px] rounded-full bg-[#f5ae2d]" />
            <button type="button" aria-label="拡大" className="h-[7px] w-[7px] rounded-full bg-[#29b739]" />
            <h1 className="pointer-events-none absolute inset-x-0 top-0 text-center text-[8px] leading-[16px] font-bold text-[#3a3838]">
              無題 - SketchUp Make 2017
            </h1>
          </div>
          <Toolbar />
        </header>
      </div>
      <main className="relative min-h-0 flex-1 overflow-hidden bg-[#d4d3cf]">
        <BlockModel />
        <Tray />
        <ColorPanel />
      </main>
      <StatusBar />
    </div>
  );
}
